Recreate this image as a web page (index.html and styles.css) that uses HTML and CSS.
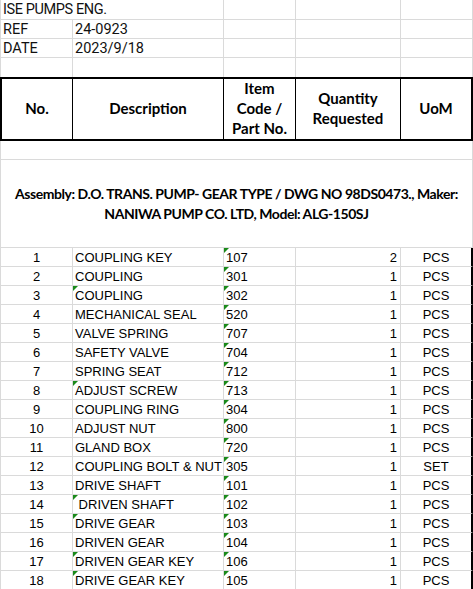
FILE: index.html
```html
<!DOCTYPE html>
<html>
<head>
<meta charset="utf-8">
<link rel="stylesheet" href="styles.css">
</head>
<body>
<div class="sheet">
  <div class="row top first">
    <div class="c c1 span2 lead tight">ISE PUMPS ENG.</div>
    <div class="c c3"></div><div class="c c4"></div><div class="c c5"></div>
  </div>
  <div class="row top">
    <div class="c c1 lead">REF</div><div class="c c2 lead">24-0923</div>
    <div class="c c3"></div><div class="c c4"></div><div class="c c5"></div>
  </div>
  <div class="row top">
    <div class="c c1 lead">DATE</div><div class="c c2 lead">2023/9/18</div>
    <div class="c c3"></div><div class="c c4"></div><div class="c c5"></div>
  </div>
  <div class="row top nob">
    <div class="c c1"></div><div class="c c2"></div>
    <div class="c c3"></div><div class="c c4"></div><div class="c c5"></div>
  </div>
  <div class="row head">
    <div class="h h1">No.</div>
    <div class="h">Description</div>
    <div class="h">Item<br>Code /<br>Part No.</div>
    <div class="h">Quantity<br>Requested</div>
    <div class="h h5">UoM</div>
  </div>
  <div class="blank"></div>
  <div class="assembly">Assembly: D.O. TRANS. PUMP- GEAR TYPE / DWG NO 98DS0473., Maker:<br>NANIWA PUMP CO. LTD, Model: ALG-150SJ</div>

  <div class="row data"><div class="c c1 num">1</div><div class="c c2 txt">COUPLING KEY</div><div class="c c3 txt tri">107</div><div class="c c4 qty">2</div><div class="c c5 uom">PCS</div></div>
  <div class="row data"><div class="c c1 num">2</div><div class="c c2 txt">COUPLING</div><div class="c c3 txt tri">301</div><div class="c c4 qty">1</div><div class="c c5 uom">PCS</div></div>
  <div class="row data"><div class="c c1 num">3</div><div class="c c2 txt tri">COUPLING</div><div class="c c3 txt tri">302</div><div class="c c4 qty">1</div><div class="c c5 uom">PCS</div></div>
  <div class="row data"><div class="c c1 num">4</div><div class="c c2 txt">MECHANICAL SEAL</div><div class="c c3 txt tri">520</div><div class="c c4 qty">1</div><div class="c c5 uom">PCS</div></div>
  <div class="row data"><div class="c c1 num">5</div><div class="c c2 txt">VALVE SPRING</div><div class="c c3 txt tri">707</div><div class="c c4 qty">1</div><div class="c c5 uom">PCS</div></div>
  <div class="row data"><div class="c c1 num">6</div><div class="c c2 txt">SAFETY VALVE</div><div class="c c3 txt tri">704</div><div class="c c4 qty">1</div><div class="c c5 uom">PCS</div></div>
  <div class="row data"><div class="c c1 num">7</div><div class="c c2 txt">SPRING SEAT</div><div class="c c3 txt tri">712</div><div class="c c4 qty">1</div><div class="c c5 uom">PCS</div></div>
  <div class="row data"><div class="c c1 num">8</div><div class="c c2 txt tri">ADJUST SCREW</div><div class="c c3 txt tri">713</div><div class="c c4 qty">1</div><div class="c c5 uom">PCS</div></div>
  <div class="row data"><div class="c c1 num">9</div><div class="c c2 txt">COUPLING RING</div><div class="c c3 txt tri">304</div><div class="c c4 qty">1</div><div class="c c5 uom">PCS</div></div>
  <div class="row data"><div class="c c1 num">10</div><div class="c c2 txt">ADJUST NUT</div><div class="c c3 txt tri">800</div><div class="c c4 qty">1</div><div class="c c5 uom">PCS</div></div>
  <div class="row data"><div class="c c1 num">11</div><div class="c c2 txt">GLAND BOX</div><div class="c c3 txt tri">720</div><div class="c c4 qty">1</div><div class="c c5 uom">PCS</div></div>
  <div class="row data"><div class="c c1 num">12</div><div class="c c2 txt">COUPLING BOLT &amp; NUT</div><div class="c c3 txt tri">305</div><div class="c c4 qty">1</div><div class="c c5 uom">SET</div></div>
  <div class="row data"><div class="c c1 num">13</div><div class="c c2 txt">DRIVE SHAFT</div><div class="c c3 txt tri">101</div><div class="c c4 qty">1</div><div class="c c5 uom">PCS</div></div>
  <div class="row data"><div class="c c1 num">14</div><div class="c c2 txt tri"> DRIVEN SHAFT</div><div class="c c3 txt tri">102</div><div class="c c4 qty">1</div><div class="c c5 uom">PCS</div></div>
  <div class="row data"><div class="c c1 num">15</div><div class="c c2 txt tri">DRIVE GEAR</div><div class="c c3 txt tri">103</div><div class="c c4 qty">1</div><div class="c c5 uom">PCS</div></div>
  <div class="row data"><div class="c c1 num">16</div><div class="c c2 txt">DRIVEN GEAR</div><div class="c c3 txt tri">104</div><div class="c c4 qty">1</div><div class="c c5 uom">PCS</div></div>
  <div class="row data"><div class="c c1 num">17</div><div class="c c2 txt tri">DRIVEN GEAR KEY</div><div class="c c3 txt tri">106</div><div class="c c4 qty">1</div><div class="c c5 uom">PCS</div></div>
  <div class="row data"><div class="c c1 num">18</div><div class="c c2 txt tri">DRIVE GEAR KEY</div><div class="c c3 txt tri">105</div><div class="c c4 qty">1</div><div class="c c5 uom">PCS</div></div>
</div>
</body>
</html>
```

FILE: styles.css
```css
* { box-sizing: border-box; }
html, body { margin: 0; padding: 0; background: #fff; }
body { width: 473px; height: 589px; overflow: hidden; color: #000; }

.sheet { width: 473px; }

.row {
  display: grid;
  grid-template-columns: 73px 151px 72px 105px 72px;
}

.c {
  position: relative;
  height: 19px;
  border-right: 1px solid #dadada;
  border-bottom: 1px solid #dadada;
  white-space: pre;
  overflow: visible;
}
.c1 { border-left: 1px solid #dadada; }
.span2 { grid-column: span 2; }

.first .c { height: 20px; }
.nob .c { border-bottom: none; }

.lead {
  font-family: Roboto, "Noto Sans CJK SC", sans-serif;
  font-size: 14.5px;
  line-height: 19px;
  padding-left: 2px;
  color: #111;
}
.tight { letter-spacing: -0.4px; }

.head .h {
  height: 64px;
  border-top: 2px solid #000;
  border-bottom: 2px solid #000;
  border-right: 1px solid #000;
  display: flex;
  align-items: center;
  justify-content: center;
  text-align: center;
  font-family: Lato, "Open Sans", sans-serif;
  font-weight: 700;
  font-size: 15px;
  line-height: 20px;
  padding-bottom: 3px;
}
.head .h1 { border-left: 2px solid #000; }
.head .h5 { border-right: 2px solid #000; }

.blank {
  height: 19px;
  border-left: 1px solid #dadada;
  border-right: 1px solid #dadada;
  border-bottom: 1px solid #dadada;
}

.assembly {
  height: 88px;
  border-left: 1px solid #dadada;
  border-right: 1px solid #dadada;
  border-bottom: 1px solid #dadada;
  display: flex;
  align-items: center;
  justify-content: center;
  text-align: center;
  white-space: nowrap;
  font-family: Lato, "Open Sans", sans-serif;
  font-weight: 700;
  font-size: 14px;
  letter-spacing: -0.45px;
  line-height: 20px;
}

.data .c {
  font-family: "Liberation Sans", Arial, sans-serif;
  font-size: 13px;
  line-height: 19px;
}
.data .c5 { border-right: 2px solid #000; }
.num { text-align: center; }
.txt { padding-left: 2px; }
.qty { text-align: right; padding-right: 3px; }
.uom { text-align: center; }

.tri::before {
  content: "";
  position: absolute;
  top: 0;
  left: 0;
  border-top: 5px solid #1a8a1a;
  border-right: 5px solid transparent;
}
```
